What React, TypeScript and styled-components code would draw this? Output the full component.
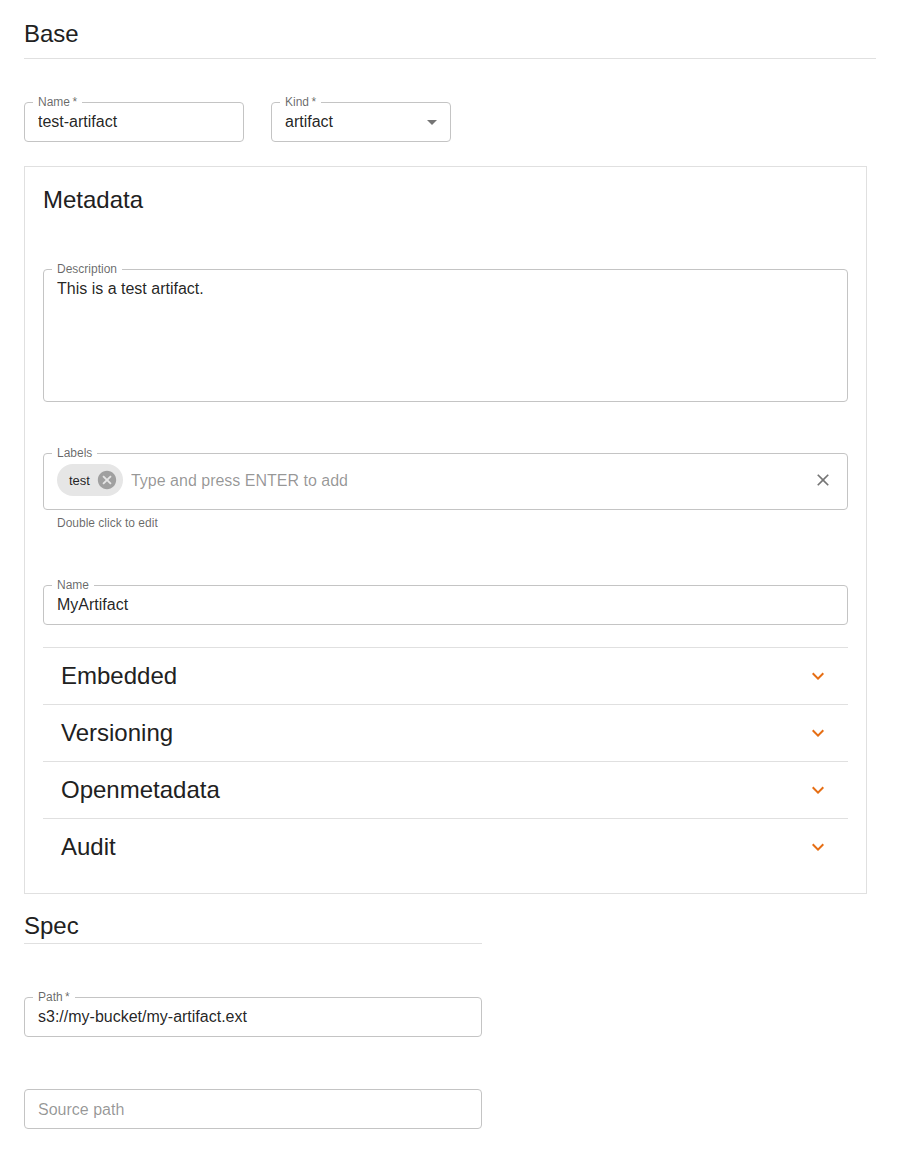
import React from 'react';
import styled, { createGlobalStyle } from 'styled-components';

const GlobalStyle = createGlobalStyle`
  body {
    margin: 0;
    background: #fff;
    font-family: "Liberation Sans", Arial, Helvetica, sans-serif;
    color: rgba(0, 0, 0, 0.87);
  }
`;

const Page = styled.div`
  padding: 18px 24px 24px;
`;

const SectionTitle = styled.h2<{ $width?: number; $gap?: number; $top?: number }>`
  margin: ${p => p.$top ?? 0}px 0 0;
  width: ${p => (p.$width ? `${p.$width}px` : 'auto')};
  padding-bottom: ${p => p.$gap ?? 8}px;
  border-bottom: 1px solid #e0e0e0;
  font-size: 24px;
  line-height: 32px;
  font-weight: 400;
  color: #212121;
`;

const FieldRow = styled.div`
  display: flex;
  align-items: flex-start;
  gap: 27px;
  margin-top: 37px;
`;

const Outline = styled.fieldset<{ $width?: number; $top?: number }>`
  margin: ${p => p.$top ?? 0}px 0 0;
  padding: 0 8px;
  width: ${p => (p.$width ? `${p.$width}px` : '100%')};
  min-width: 0;
  box-sizing: border-box;
  border: 1px solid #c4c4c4;
  border-radius: 4px;
`;

const Legend = styled.legend`
  padding: 0 5px;
  font-size: 12px;
  line-height: 12px;
  color: rgba(0, 0, 0, 0.6);
`;

const Inner = styled.div<{ $pad: string }>`
  display: flex;
  align-items: center;
  padding: ${p => p.$pad};
`;

const TextInput = styled.input`
  flex: 1;
  min-width: 0;
  border: 0;
  outline: 0;
  padding: 0 5px;
  background: transparent;
  font: inherit;
  font-size: 16px;
  line-height: 19px;
  height: 19px;
  color: rgba(0, 0, 0, 0.87);

  &::placeholder {
    color: rgba(0, 0, 0, 0.42);
    opacity: 1;
  }
`;

const TextArea = styled.textarea`
  display: block;
  width: 100%;
  height: 126px;
  box-sizing: border-box;
  border: 0;
  outline: 0;
  resize: none;
  padding: 4px 5px;
  font: inherit;
  font-size: 16px;
  line-height: 19px;
  color: rgba(0, 0, 0, 0.87);
`;

const SelectValue = styled.div`
  flex: 1;
  padding: 0 5px;
  font-size: 16px;
  line-height: 19px;
`;

const Icon = styled.svg<{ $size: number; $color: string; $mr?: number; $my?: number }>`
  width: ${p => p.$size}px;
  height: ${p => p.$size}px;
  flex-shrink: 0;
  fill: ${p => p.$color};
  margin: ${p => p.$my ?? 0}px ${p => p.$mr ?? 0}px ${p => p.$my ?? 0}px 0;
`;

const MetaBox = styled.div`
  margin: 24px 9px 0 0;
  padding: 17px 18px 18px;
  border: 1px solid #e0e0e0;
`;

const BoxTitle = styled.h3`
  margin: 0;
  font-size: 24px;
  line-height: 32px;
  font-weight: 400;
  color: #212121;
`;

const Chip = styled.div`
  display: inline-flex;
  align-items: center;
  height: 32px;
  margin-left: 5px;
  border-radius: 16px;
  background: #e6e6e6;
  font-size: 13px;
  color: rgba(0, 0, 0, 0.87);
  flex-shrink: 0;

  span {
    padding: 0 12px;
  }

  svg {
    width: 22px;
    height: 22px;
    margin: 0 5px 0 -6px;
    fill: rgba(0, 0, 0, 0.3);
  }
`;

const ChipInput = styled(TextInput)`
  padding: 0 0 0 8px;
`;

const Helper = styled.p`
  margin: 3px 0 0 14px;
  font-size: 12px;
  line-height: 20px;
  color: rgba(0, 0, 0, 0.6);
`;

const Accordion = styled.div`
  margin-top: 22px;
`;

const AccordionRow = styled.div`
  display: flex;
  align-items: center;
  justify-content: space-between;
  height: 56px;
  padding: 0 18px;
  border-top: 1px solid #e0e0e0;
  font-size: 24px;
  color: #212121;
`;

const EXPAND = 'M16.59 8.59 12 13.17 7.41 8.59 6 10l6 6 6-6z';
const CLOSE =
  'M19 6.41 17.59 5 12 10.59 6.41 5 5 6.41 10.59 12 5 17.59 6.41 19 12 13.41 17.59 19 19 17.59 13.41 12z';
const CANCEL =
  'M12 2C6.47 2 2 6.47 2 12s4.47 10 10 10 10-4.47 10-10S17.53 2 12 2zm5 13.59L15.59 17 12 13.41 8.41 17 7 15.59 10.59 12 7 8.41 8.41 7 12 10.59 15.59 7 17 8.41 13.41 12 17 15.59z';

type FieldProps = {
  label?: string;
  value?: string;
  placeholder?: string;
  width?: number;
  top?: number;
};

const Field: React.FC<FieldProps> = ({ label, value, placeholder, width, top }) => (
  <Outline $width={width} $top={top}>
    {label && <Legend>{label}</Legend>}
    <Inner $pad={label ? '4px 0 10px' : '10px 0 9px'}>
      <TextInput defaultValue={value} placeholder={placeholder} />
    </Inner>
  </Outline>
);

const sections = ['Embedded', 'Versioning', 'Openmetadata', 'Audit'];

const App: React.FC = () => {
  return (
    <Page>
      <GlobalStyle />
      <SectionTitle>Base</SectionTitle>

      <FieldRow>
        <Field label={'Name\u2009*'} value="test-artifact" width={220} />
        <Outline $width={180}>
          <Legend>{'Kind\u2009*'}</Legend>
          <Inner $pad="4px 0 10px">
            <SelectValue>artifact</SelectValue>
            <Icon viewBox="0 0 24 24" $size={24} $color="rgba(0,0,0,0.54)" $mr={-2} $my={-3}>
              <path d="M7 10l5 5 5-5z" />
            </Icon>
          </Inner>
        </Outline>
      </FieldRow>

      <MetaBox>
        <BoxTitle>Metadata</BoxTitle>

        <Outline $top={47}>
          <Legend>Description</Legend>
          <TextArea defaultValue="This is a test artifact." />
        </Outline>

        <Outline $top={45}>
          <Legend>Labels</Legend>
          <Inner $pad="5px 0 13px">
            <Chip>
              <span>test</span>
              <svg viewBox="0 0 24 24">
                <path d={CANCEL} />
              </svg>
            </Chip>
            <ChipInput placeholder="Type and press ENTER to add" />
            <Icon viewBox="0 0 24 24" $size={20} $color="rgba(0,0,0,0.54)" $mr={6}>
              <path d={CLOSE} />
            </Icon>
          </Inner>
        </Outline>
        <Helper>Double click to edit</Helper>

        <Field label="Name" value="MyArtifact" top={46} />

        <Accordion>
          {sections.map(s => (
            <AccordionRow key={s}>
              {s}
              <Icon viewBox="0 0 24 24" $size={24} $color="#e66e14">
                <path d={EXPAND} />
              </Icon>
            </AccordionRow>
          ))}
        </Accordion>
      </MetaBox>

      <SectionTitle $width={458} $gap={1} $top={16}>
        Spec
      </SectionTitle>
      <Field label={'Path\u2009*'} value="s3://my-bucket/my-artifact.ext" width={458} top={47} />
      <Field placeholder="Source path" width={458} top={52} />
    </Page>
  );
};

export default App;
